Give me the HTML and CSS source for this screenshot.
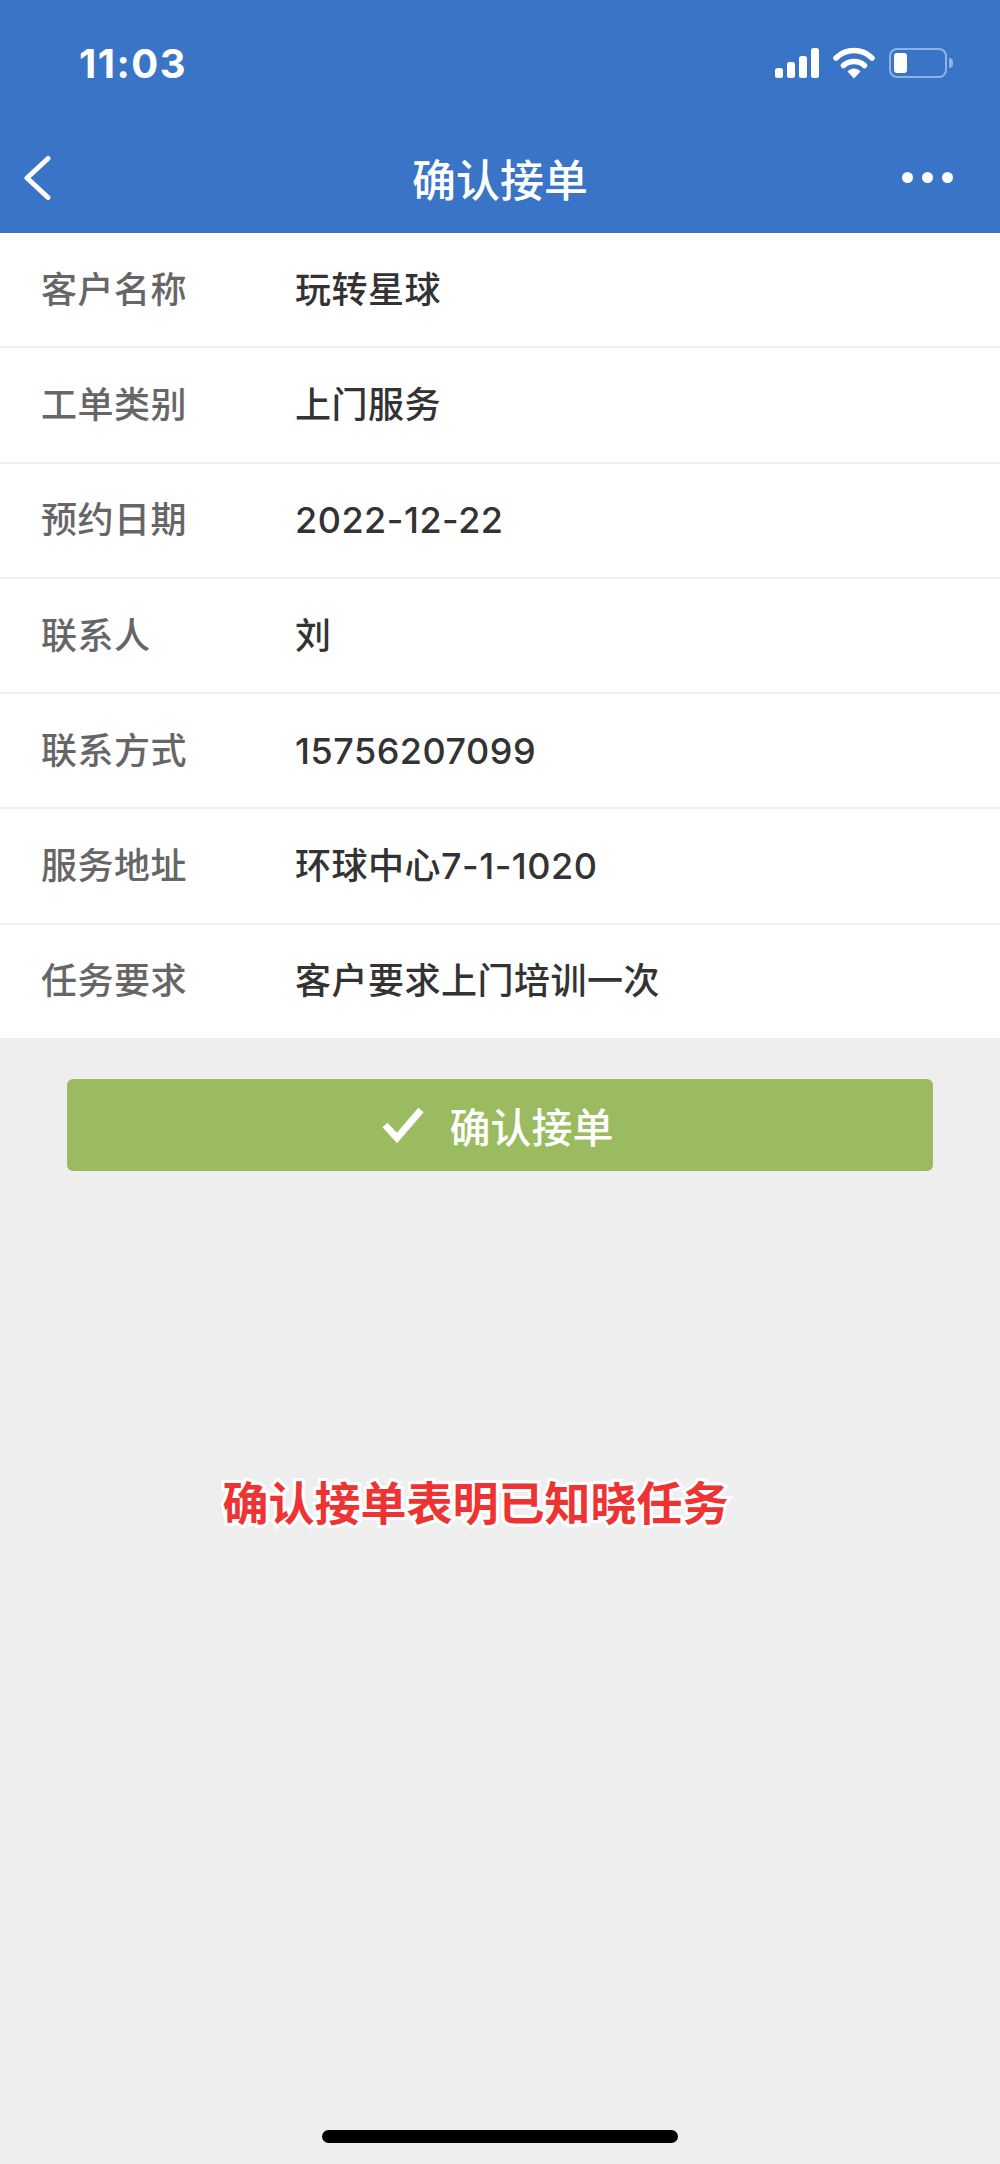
FILE: index.html
```html
<!DOCTYPE html>
<html lang="zh-CN">
<head>
    <meta charset="UTF-8">
    <meta name="viewport" content="width=device-width, initial-scale=1.0">
    <title>确认接单</title>
    <link rel="stylesheet" href="styles.css">
</head>
<body>
    <div id="app">
        <!-- Status bar + nav -->
        <header class="top">
            <div class="status">
                <span class="time">11:03</span>
                <div class="status-icons">
                    <svg class="signal" width="44" height="30" viewBox="0 0 44 30">
                        <rect x="0" y="20" width="8" height="10" rx="2.5"/>
                        <rect x="12" y="14" width="8" height="16" rx="2.5"/>
                        <rect x="24" y="8" width="8" height="22" rx="2.5"/>
                        <rect x="36" y="0" width="8" height="30" rx="2.5"/>
                    </svg>
                    <svg class="wifi" width="42" height="32" viewBox="0 0 42 32">
                        <path d="M3 11C13 1 29 1 39 11" fill="none" stroke="#fff" stroke-width="5.5" stroke-linecap="round"/>
                        <path d="M10.500 18.500C16 13 26 13 31.500 18.500" fill="none" stroke="#fff" stroke-width="5.500" stroke-linecap="round"/>
                        <path d="M14.500 24.500C18 20.500 24 20.500 27.500 24.500L21 31.500Z" fill="#fff"/>
                    </svg>
                    <div class="battery">
                        <div class="battery-body"><div class="battery-level"></div></div>
                        <div class="battery-cap"></div>
                    </div>
                </div>
            </div>
            <nav class="navbar">
                <svg class="back" width="30" height="48" viewBox="0 0 30 48">
                    <path d="M24 4.500L3 24L24 43.500" fill="none" stroke="#fff" stroke-width="5" stroke-linecap="round" stroke-linejoin="round"/>
                </svg>
                <h1 class="title">确认接单</h1>
                <div class="more"><i></i><i></i><i></i></div>
            </nav>
        </header>

        <!-- Order details -->
        <section class="details">
            <div class="row"><span class="label">客户名称</span><span class="value">玩转星球</span></div>
            <div class="row"><span class="label">工单类别</span><span class="value">上门服务</span></div>
            <div class="row"><span class="label">预约日期</span><span class="value">2022-12-22</span></div>
            <div class="row"><span class="label">联系人</span><span class="value">刘</span></div>
            <div class="row"><span class="label">联系方式</span><span class="value">15756207099</span></div>
            <div class="row"><span class="label">服务地址</span><span class="value">环球中心7-1-1020</span></div>
            <div class="row"><span class="label">任务要求</span><span class="value">客户要求上门培训一次</span></div>
        </section>

        <button class="confirm">
            <svg width="42" height="36" viewBox="0 0 42 36">
                <path d="M3 18L15 31L39 3" fill="none" stroke="#fff" stroke-width="7" stroke-linejoin="miter"/>
            </svg>
            <span>确认接单</span>
        </button>

        <p class="caption">确认接单表明已知晓任务</p>

        <div class="home-bar"></div>
    </div>
</body>
</html>
```

FILE: styles.css
```css
* {
    box-sizing: border-box;
}

body {
    margin: 0;
    padding: 0;
    background-color: #eeeeee;
    font-family: Inter, "Noto Sans CJK SC", sans-serif;
}

#app {
    width: 1000px;
    height: 2164px;
    display: flex;
    flex-direction: column;
    overflow: hidden;
}

.top {
    height: 233px;
    background-color: #3974c6;
    color: #fff;
}

.status {
    height: 122px;
    padding: 46px 47px 0 79px;
    display: flex;
    justify-content: space-between;
    align-items: flex-start;
}

.time {
    font-size: 40px;
    font-weight: 700;
    line-height: 36px;
    letter-spacing: 1.5px;
}

.status-icons {
    display: flex;
    align-items: center;
    gap: 14px;
    height: 32px;
    margin-top: 1px;
}

.signal {
    fill: #fff;
}

.battery {
    display: flex;
    align-items: center;
    gap: 2px;
}

.battery-body {
    width: 58px;
    height: 30px;
    padding: 3px;
    border: 2.500px solid #8fb2e4;
    border-radius: 8px;
}

.battery-level {
    width: 13px;
    height: 100%;
    background-color: #fff;
    border-radius: 3px;
}

.battery-cap {
    width: 4px;
    height: 10px;
    background-color: #8fb2e4;
    border-radius: 0 5px 5px 0;
}

.navbar {
    height: 111px;
    padding: 0 47px;
    display: grid;
    grid-template-columns: 1fr auto 1fr;
    align-items: center;
}

.back {
    margin-left: -23px;
}

.title {
    margin: 0;
    font-size: 44px;
    font-weight: 500;
}

.more {
    display: flex;
    justify-content: flex-end;
    gap: 9px;
}

.more i {
    width: 11px;
    height: 11px;
    background-color: #fff;
    border-radius: 50%;
}

.details {
    background-color: #fff;
}

.row {
    height: 115.3px;
    padding-left: 41px;
    display: flex;
    align-items: center;
    font-size: 36px;
    line-height: 50px;
    letter-spacing: 0.5px;
    border-bottom: 2px solid #efefef;
}

.row:last-child {
    height: 113px;
    border-bottom: none;
}

.label {
    width: 254px;
    color: #666666;
    font-weight: 500;
}

.value {
    color: #333333;
    font-weight: 500;
}

.confirm {
    margin: 41px 67px 0;
    padding: 0 5px 0 0;
    height: 92px;
    display: flex;
    justify-content: center;
    align-items: center;
    gap: 26px;
    color: #fff;
    background-color: #9abb60;
    border: none;
    border-radius: 6px;
    font-family: inherit;
    font-size: 41px;
    font-weight: 500;
}

.caption {
    margin: 298px 49px 0 0;
    text-align: center;
    color: #ee3333;
    font-size: 46px;
    font-weight: 700;
    line-height: 68px;
    -webkit-text-stroke: 6px #fff;
    paint-order: stroke fill;
}

.home-bar {
    width: 356px;
    height: 13px;
    margin: 593px auto 0;
    background-color: #000;
    border-radius: 7px;
}
```
